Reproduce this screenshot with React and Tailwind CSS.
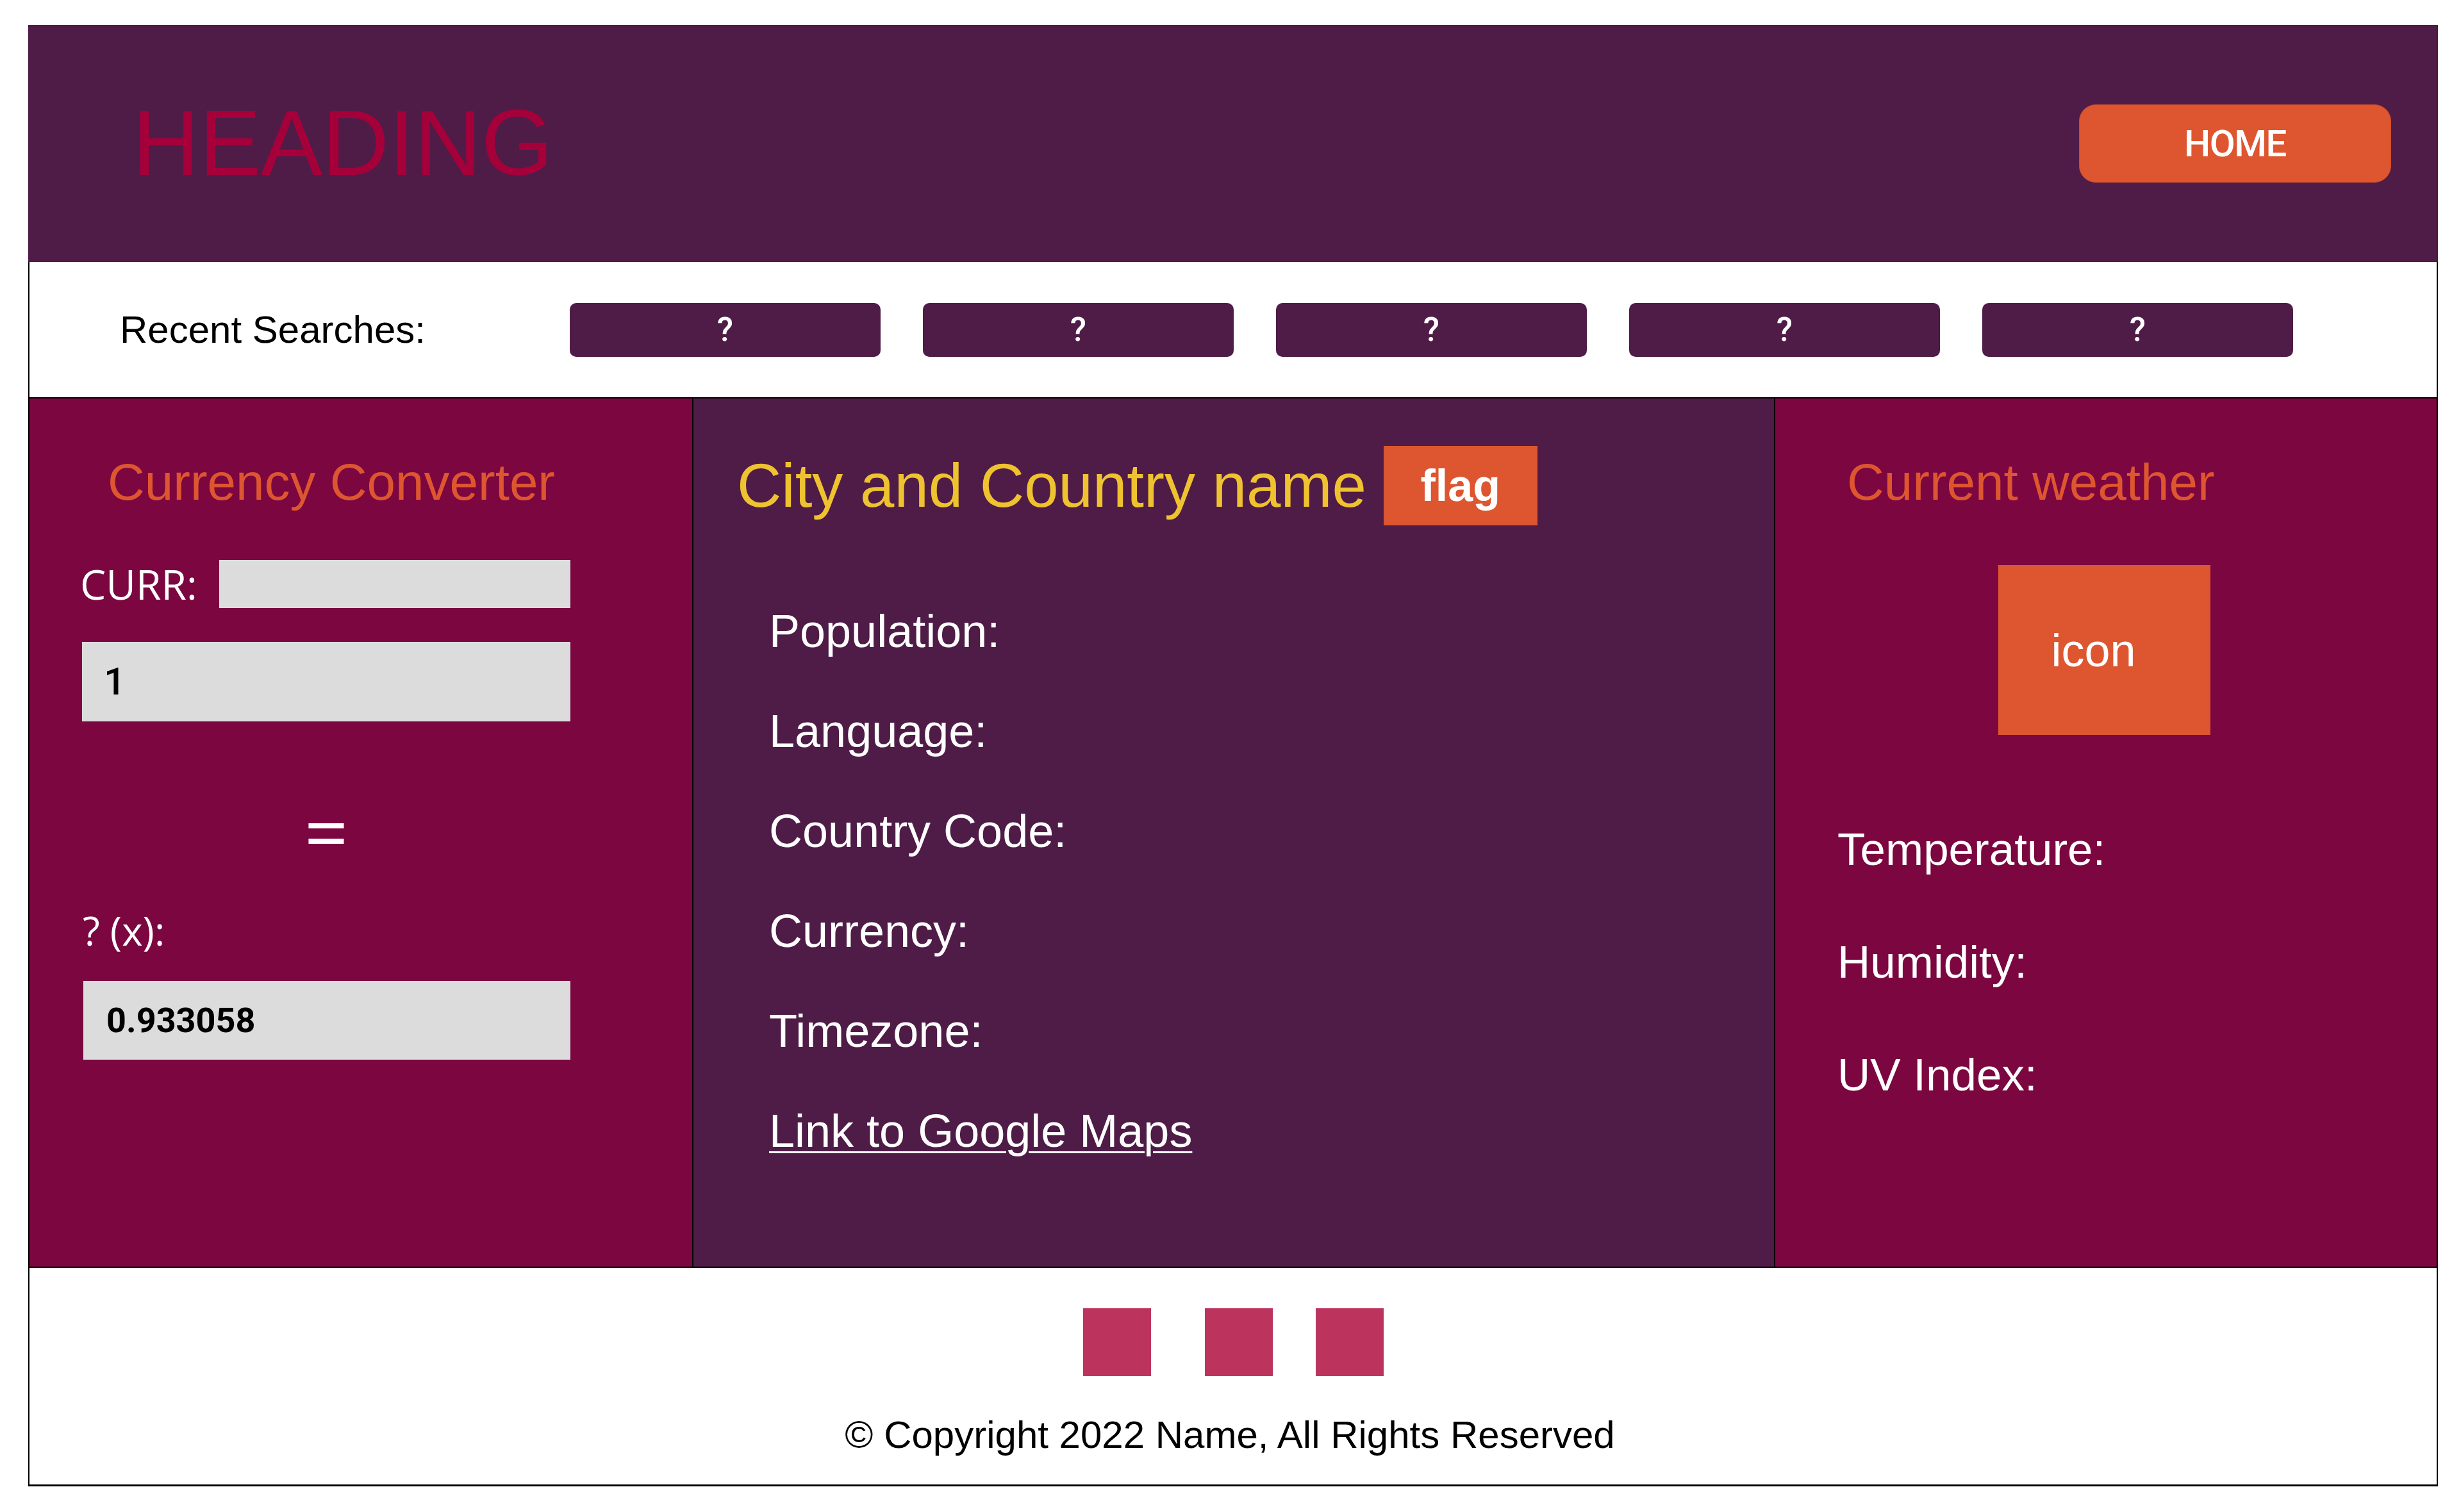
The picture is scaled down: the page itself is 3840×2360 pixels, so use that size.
import React from 'react';

const arial = { fontFamily: '"Liberation Sans", Arial, sans-serif' };
const myriad = { fontFamily: '"Open Sans", "Noto Sans", sans-serif' };
const din = { fontFamily: 'Roboto, "Liberation Sans", sans-serif' };

const recent = ['?', '?', '?', '?', '?'];

function Header() {
    return (
        <header className="h-[370px] bg-[#4f1c47] flex items-center justify-between pl-[163px] pr-[73px]">
            <h1 className="text-[144px] leading-none text-[#a5003a] font-normal" style={arial}>HEADING</h1>
            <button
                className="w-[487px] h-[122px] rounded-[26px] bg-[#dd5630] border border-[#c94b28] text-white text-[58px] font-medium tracking-tight flex items-center justify-center"
                style={din}
            >
                HOME
            </button>
        </header>
    );
}

function RecentSearches() {
    return (
        <div className="h-[211px] flex items-center pl-[141px]">
            <div className="w-[702px] text-[60px] leading-none text-black" style={arial}>Recent Searches:</div>
            <div className="flex gap-[66px]">
                {recent.map((r, i) => (
                    <button
                        key={i}
                        className="w-[485px] h-[84px] rounded-[10px] bg-[#4f1c47] text-white text-[52px] font-medium leading-none flex items-center justify-center"
                        style={din}
                    >
                        {r}
                    </button>
                ))}
            </div>
        </div>
    );
}

function CurrencyPanel() {
    return (
        <section className="w-[1034px] bg-[#7b0640] flex flex-col pl-[82px]">
            <h2 className="mt-[91px] ml-[40px] text-[80px] leading-none text-[#dd5630]" style={arial}>Currency Converter</h2>

            <div className="mt-[81px] w-[762px] h-[75px] flex items-center justify-between">
                <span className="text-[64px] leading-none text-white -ml-[3px]" style={myriad}>CURR:</span>
                <div className="w-[548px] h-[75px] bg-[#dcdcdc]" />
            </div>

            <div className="mt-[53px] w-[762px] h-[124px] bg-[#dcdcdc] flex items-center pl-[34px]">
                <span className="text-[60px] font-medium leading-none text-black" style={din}>1</span>
            </div>

            <div className="mt-[112px] w-[762px] h-[120px] flex items-center justify-center">
                <span className="text-[120px] leading-none text-white" style={myriad}>=</span>
            </div>

            <div className="mt-[63px] ml-[1px] text-[62px] leading-none text-white" style={myriad}>? (x):</div>

            <div className="mt-[48px] w-[760px] ml-[2px] h-[123px] bg-[#dcdcdc] flex items-center pl-[36px]">
                <span className="text-[54px] font-bold leading-none text-black" style={din}>0.933058</span>
            </div>
        </section>
    );
}

function CountryPanel() {
    const rows = ['Population:', 'Language:', 'Country Code:', 'Currency:', 'Timezone:'];
    return (
        <section className="w-[1688px] border-l-2 border-black bg-[#4f1c47] flex flex-col" style={arial}>
            <div className="mt-[74px] pl-[68px] flex items-center gap-[27px]">
                <h2 className="text-[96px] leading-none text-[#efc22f]">City and Country name</h2>
                <div className="w-[240px] h-[124px] bg-[#dd5630] flex items-center justify-center">
                    <span className="text-[70px] font-bold leading-none text-white">flag</span>
                </div>
            </div>

            <div className="mt-[87px] pl-[118px] flex flex-col text-white text-[72px] leading-[156px]">
                {rows.map((r) => (
                    <div key={r}>{r}</div>
                ))}
                <div>
                    <a href="#" className="underline decoration-[3px] underline-offset-[7px]">Link to Google Maps</a>
                </div>
            </div>
        </section>
    );
}

function WeatherPanel() {
    const rows = ['Temperature:', 'Humidity:', 'UV Index:'];
    return (
        <section className="flex-1 border-l-2 border-black bg-[#7b0640] flex flex-col" style={arial}>
            <h2 className="mt-[91px] pl-[112px] text-[80px] leading-none text-[#dd5630]">Current weather</h2>
            <div className="mt-[89px] ml-[348px] w-[331px] h-[265px] bg-[#dd5630] flex items-center justify-center pr-[34px]">
                <span className="text-[72px] leading-none text-white">icon</span>
            </div>
            <div className="mt-[91px] pl-[97px] flex flex-col text-white text-[71px] leading-[176px]">
                {rows.map((r) => (
                    <div key={r}>{r}</div>
                ))}
            </div>
        </section>
    );
}

function Footer() {
    return (
        <footer className="flex flex-col items-center pt-[63px] pb-[47px]">
            <div className="flex">
                <div className="w-[106px] h-[106px] bg-[#bc345e]" />
                <div className="w-[106px] h-[106px] bg-[#bc345e] ml-[84px]" />
                <div className="w-[106px] h-[106px] bg-[#bc345e] ml-[67px]" />
            </div>
            <p className="mt-[62px] -ml-[10px] text-[60px] leading-none text-black" style={arial}>
                © Copyright 2022 Name, All Rights Reserved
            </p>
        </footer>
    );
}

export default function App() {
    return (
        <div className="min-h-screen bg-white pt-[39px] pl-[44px]">
            <div className="w-[3760px]">
                <Header />
                <div className="border-x-2 border-b-[3px] border-black">
                    <RecentSearches />
                    <div className="flex h-[1359px] border-y-2 border-black">
                        <CurrencyPanel />
                        <CountryPanel />
                        <WeatherPanel />
                    </div>
                    <Footer />
                </div>
            </div>
        </div>
    );
}
